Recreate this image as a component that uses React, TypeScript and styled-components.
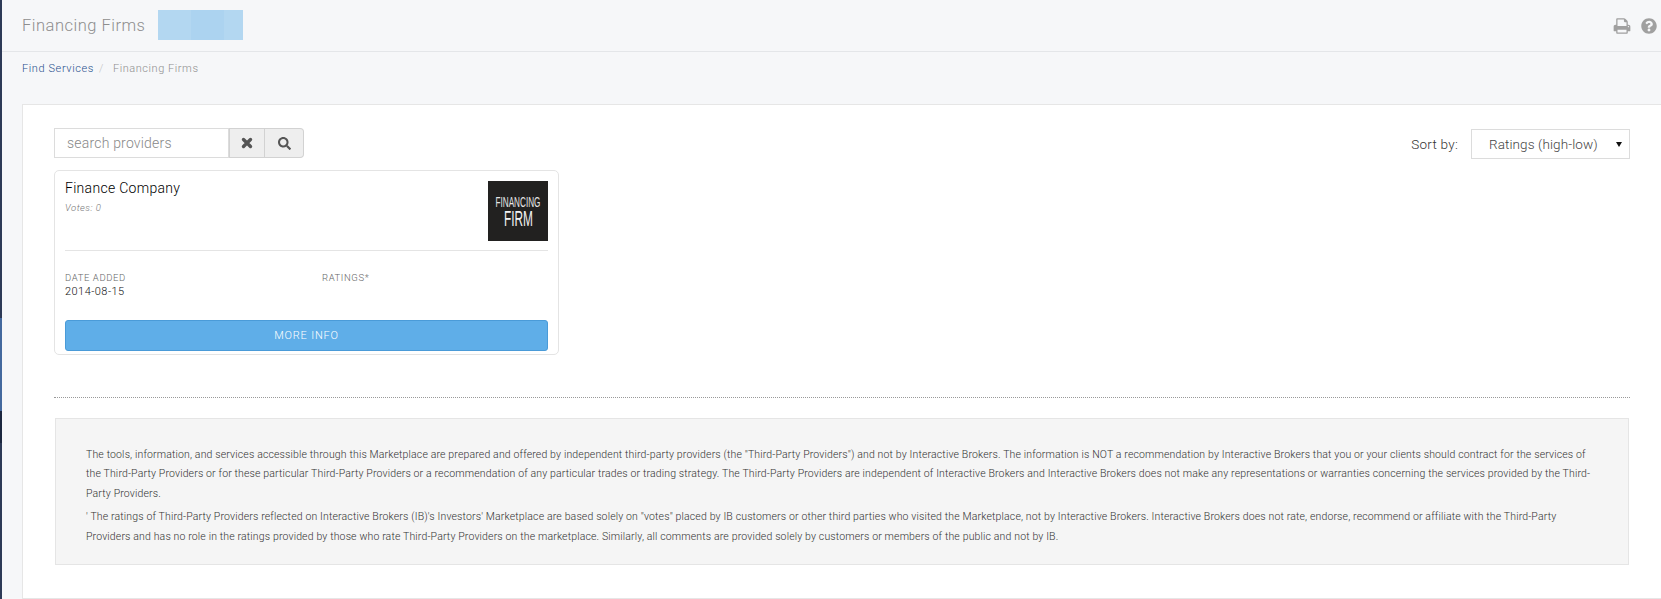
import styled, { createGlobalStyle } from "styled-components";
import { FaQuestionCircle, FaSearch } from "react-icons/fa";

const GlobalStyle = createGlobalStyle`
    html, body {
        margin: 0;
        padding: 0;
        background: #f6f7f9;
        font-family: "Roboto", "Liberation Sans", sans-serif;
        overflow: hidden;
    }
`;

const Page = styled.div`
    display: flex;
    width: 1661px;
    height: 599px;
    overflow: hidden;
`;
const SideEdge = styled.div`
    width: 2px;
    flex: none;
    display: flex;
    flex-direction: column;
`;
const EdgePiece = styled.div<{ $h: number; $c: string }>`
    height: ${(p) => p.$h}px;
    background: ${(p) => p.$c};
`;
const Main = styled.div`
    flex: 1;
    min-width: 0;
`;
const TitleBar = styled.div`
    height: 52px;
    box-sizing: border-box;
    border-bottom: 1px solid #e4e6e9;
    display: flex;
    align-items: center;
    padding: 0 4px 0 20px;
`;
const Title = styled.h1`
    margin: 0;
    font-size: 16.5px;
    font-weight: 300;
    letter-spacing: 0.5px;
    color: #8e8e8e;
`;
const Redacted = styled.div`
    width: 85px;
    height: 30px;
    margin: -1px 0 0 13px;
    background: linear-gradient(90deg, #b3d7f1 0 33px, #acd3f0 33px 66px, #b3d7f1 66px);
`;
const BarIcons = styled.div`
    margin-left: auto;
    display: flex;
    align-items: center;
    gap: 10px;
    color: #a0a0a0;
    font-size: 16px;
`;
const Crumbs = styled.div`
    height: 52px;
    padding: 10px 0 0 20px;
    box-sizing: border-box;
    font-size: 11px;
    font-weight: 300;
    letter-spacing: 0.55px;
    line-height: 14px;
    color: #8f8f8f;
`;
const CrumbLink = styled.a`
    color: #1f4f8c;
    letter-spacing: 0.6px;
`;
const CrumbSep = styled.span`
    color: #c4c4c4;
    margin: 0 9px 0 5px;
`;
const Panel = styled.div`
    margin-left: 20px;
    height: 495px;
    box-sizing: border-box;
    background: #fff;
    border: 1px solid #e6e6e6;
    border-right: none;
    padding: 23px 31px 0 31px;
`;
const Toolbar = styled.div`
    display: flex;
    align-items: flex-start;
    justify-content: space-between;
`;
const SearchGroup = styled.div`
    display: flex;
    height: 30px;
`;
const SearchInput = styled.div`
    width: 175px;
    box-sizing: border-box;
    border: 1px solid #dcdcdc;
    padding-left: 12px;
    font-size: 14px;
    letter-spacing: 0.2px;
    font-weight: 300;
    line-height: 28px;
    color: #888;
`;
const GroupButton = styled.button<{ $last?: boolean; $w: number }>`
    width: ${(p) => p.$w}px;
    padding: 0;
    background: #eeeeee;
    border: 1px solid #d2d2d2;
    border-left: ${(p) => (p.$last ? "none" : "1px solid #d2d2d2")};
    border-radius: ${(p) => (p.$last ? "0 4px 4px 0" : "0")};
    color: #555;
    font-size: 13px;
    display: flex;
    align-items: center;
    justify-content: center;
`;
const SortBox = styled.div`
    display: flex;
    align-items: center;
    gap: 13px;
    font-size: 13.5px;
    font-weight: 300;
    color: #333;
    letter-spacing: 0.25px;
    margin-top: 1px;
`;
const Select = styled.div`
    width: 159px;
    height: 30px;
    box-sizing: border-box;
    border: 1px solid #dcdcdc;
    display: flex;
    align-items: center;
    justify-content: space-between;
    padding: 0 7px 0 17px;
    letter-spacing: 0.1px;
    color: #444;
`;
const Caret = styled.span`
    width: 0;
    height: 0;
    border-left: 3px solid transparent;
    border-right: 3px solid transparent;
    border-top: 5px solid #111;
`;
const Card = styled.div`
    width: 505px;
    height: 185px;
    box-sizing: border-box;
    margin-top: 11px;
    border: 1px solid #e4e4e4;
    border-radius: 5px;
    padding: 10px;
`;
const CardTop = styled.div`
    display: flex;
    justify-content: space-between;
    height: 69px;
    border-bottom: 1px solid #e4e4e4;
`;
const CardName = styled.div`
    font-size: 14px;
    font-weight: 300;
    letter-spacing: 0.3px;
    color: #000;
    line-height: 15px;
`;
const Votes = styled.div`
    font-size: 9.5px;
    font-style: italic;
    font-weight: 300;
    letter-spacing: 0.5px;
    color: #777;
    margin-top: 6px;
`;
const LogoArt = styled.svg`
    display: block;
    flex: none;
    width: 60px;
    height: 60px;
`;
const Stats = styled.div`
    display: grid;
    grid-template-columns: 257px 1fr;
    margin-top: 21px;
    height: 48px;
`;
const StatLabel = styled.div`
    font-size: 9.5px;
    font-weight: 300;
    letter-spacing: 0.6px;
    line-height: 11px;
    color: #666;
`;
const StatValue = styled.div`
    font-size: 11px;
    font-weight: 300;
    letter-spacing: 0.45px;
    line-height: 13px;
    margin-top: 2px;
    color: #111;
`;
const MoreButton = styled.button`
    display: block;
    width: 100%;
    height: 31px;
    padding: 0;
    background: #5faee8;
    border: 1px solid #4a9bd8;
    border-radius: 3px;
    color: #fff;
    font-family: inherit;
    font-size: 11px;
    font-weight: 300;
    letter-spacing: 0.8px;
`;
const Rule = styled.div`
    margin-top: 42px;
    border-top: 1px dotted #999;
`;
const Disclaimer = styled.div`
    margin: 20px 1px 0 1px;
    height: 147px;
    box-sizing: border-box;
    background: #f5f5f5;
    border: 1px solid #e5e5e5;
    padding: 26px 30px 0;
    font-size: 10.5px;
    font-weight: 300;
    letter-spacing: 0.15px;
    line-height: 19.4px;
    color: #333;
`;
const Para = styled.p`
    margin: 0 0 4px;
`;

const edge: [number, string][] = [
    [318, "#2d3a57"],
    [93, "#44699e"],
    [32, "#1c2740"],
    [156, "#2d3a57"],
];

function PrintIcon() {
    return (
        <svg width="18" height="18" viewBox="0 0 1792 1792" fill="currentColor">
            <path d="M448 1536h896v-256h-896v256zm0-640h896v-384h-160q-40 0-68-28t-28-68v-160h-640v640zm1152 64q0-26-19-45t-45-19-45 19-19 45 19 45 45 19 45-19 19-45zm128 0v416q0 13-9.5 22.5t-22.5 9.5h-224v160q0 40-28 68t-68 28h-960q-40 0-68-28t-28-68v-160h-224q-13 0-22.5-9.5t-9.5-22.5v-416q0-79 56.5-135.5t135.5-56.5h64v-544q0-40 28-68t68-28h672q40 0 88 20t76 48l152 152q28 28 48 76t20 88v256h64q79 0 135.5 56.5t56.5 135.5z" />
        </svg>
    );
}

export default function App() {
    return (
        <Page>
            <GlobalStyle />
            <SideEdge>
                {edge.map(([h, c]) => (
                    <EdgePiece key={c + h} $h={h} $c={c} />
                ))}
            </SideEdge>
            <Main>
                <TitleBar>
                    <Title>Financing Firms</Title>
                    <Redacted />
                    <BarIcons>
                        <PrintIcon />
                        <FaQuestionCircle />
                    </BarIcons>
                </TitleBar>
                <Crumbs>
                    <CrumbLink>Find Services</CrumbLink>
                    <CrumbSep>/</CrumbSep>
                    Financing Firms
                </Crumbs>
                <Panel>
                    <Toolbar>
                        <SearchGroup>
                            <SearchInput>search providers</SearchInput>
                            <GroupButton $w={36}>
                                <svg width="12" height="12" viewBox="0 0 12 12">
                                    <path
                                        d="M2.5 2.5 L9.5 9.5 M9.5 2.5 L2.5 9.5"
                                        stroke="#555"
                                        strokeWidth="3.4"
                                        strokeLinecap="round"
                                    />
                                </svg>
                            </GroupButton>
                            <GroupButton $w={39} $last>
                                <FaSearch />
                            </GroupButton>
                        </SearchGroup>
                        <SortBox>
                            Sort by:
                            <Select>
                                Ratings (high-low)
                                <Caret />
                            </Select>
                        </SortBox>
                    </Toolbar>
                    <Card>
                        <CardTop>
                            <div>
                                <CardName>Finance Company</CardName>
                                <Votes>Votes: 0</Votes>
                            </div>
                            <LogoArt viewBox="0 0 60 60">
                                <rect width="60" height="60" fill="#222120" />
                                <text
                                    transform="translate(7.5 26) scale(0.535 1)"
                                    fontFamily="Liberation Sans, sans-serif"
                                    fontSize="15.3"
                                    fill="#e6e6e6"
                                >
                                    FINANCING
                                </text>
                                <text
                                    transform="translate(16 45) scale(0.54 1)"
                                    fontFamily="Liberation Sans, sans-serif"
                                    fontSize="22"
                                    fill="#f2f2f2"
                                >
                                    FIRM
                                </text>
                            </LogoArt>
                        </CardTop>
                        <Stats>
                            <div>
                                <StatLabel>DATE ADDED</StatLabel>
                                <StatValue>2014-08-15</StatValue>
                            </div>
                            <StatLabel>RATINGS*</StatLabel>
                        </Stats>
                        <MoreButton>MORE INFO</MoreButton>
                    </Card>
                    <Rule />
                    <Disclaimer>
                        <Para>
                            The tools, information, and services accessible through this Marketplace are prepared and offered by independent third-party providers (the "Third-Party Providers") and not by Interactive Brokers. The information is NOT a recommendation by Interactive Brokers that you or your clients should contract for the services of the Third-Party Providers or for these particular Third-Party Providers or a recommendation of any particular trades or trading strategy. The Third-Party Providers are independent of Interactive Brokers and Interactive Brokers does not make any representations or warranties concerning the services provided by the Third-Party Providers.
                        </Para>
                        <Para>
                            ' The ratings of Third-Party Providers reflected on Interactive Brokers (IB)'s Investors' Marketplace are based solely on "votes" placed by IB customers or other third parties who visited the Marketplace, not by Interactive Brokers. Interactive Brokers does not rate, endorse, recommend or affiliate with the Third-Party Providers and has no role in the ratings provided by those who rate Third-Party Providers on the marketplace. Similarly, all comments are provided solely by customers or members of the public and not by IB.
                        </Para>
                    </Disclaimer>
                </Panel>
            </Main>
        </Page>
    );
}
